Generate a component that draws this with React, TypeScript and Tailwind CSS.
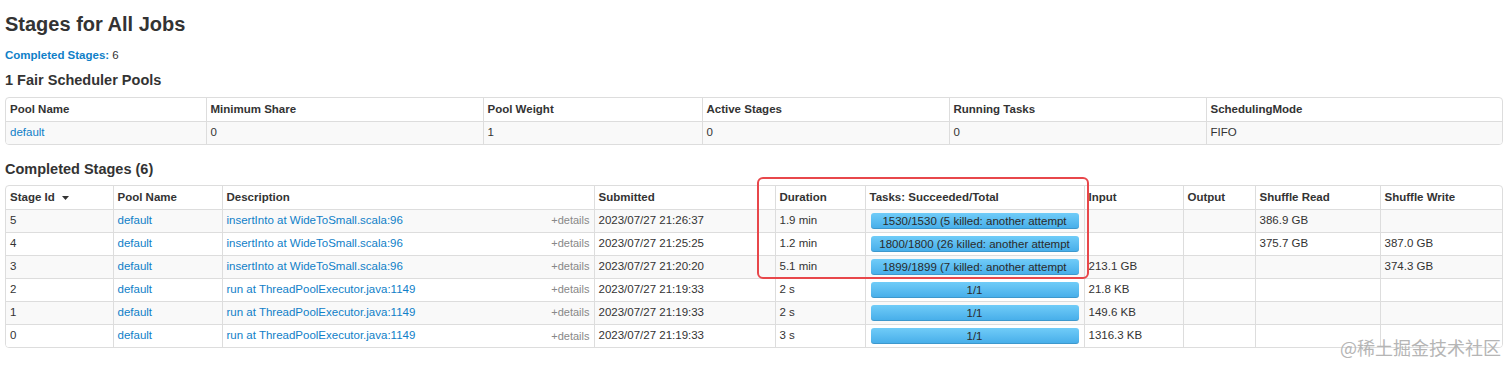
import React from 'react'

const poolCols = [
  { name: 'Pool Name', w: 200 },
  { name: 'Minimum Share', w: 277 },
  { name: 'Pool Weight', w: 219 },
  { name: 'Active Stages', w: 247 },
  { name: 'Running Tasks', w: 257 },
  { name: 'SchedulingMode', w: 298 },
]

const stageCols = [
  { name: 'Stage Id', w: 107 },
  { name: 'Pool Name', w: 109 },
  { name: 'Description', w: 372 },
  { name: 'Submitted', w: 181 },
  { name: 'Duration', w: 90 },
  { name: 'Tasks: Succeeded/Total', w: 219 },
  { name: 'Input', w: 99 },
  { name: 'Output', w: 72 },
  { name: 'Shuffle Read', w: 125 },
  { name: 'Shuffle Write', w: 124 },
]

type Stage = {
  id: number
  desc: string
  submitted: string
  duration: string
  tasks: string
  input: string
  shuffleRead: string
  shuffleWrite: string
}

const stages: Stage[] = [
  { id: 5, desc: 'insertInto at WideToSmall.scala:96', submitted: '2023/07/27 21:26:37', duration: '1.9 min', tasks: '1530/1530 (5 killed: another attempt', input: '', shuffleRead: '386.9 GB', shuffleWrite: '' },
  { id: 4, desc: 'insertInto at WideToSmall.scala:96', submitted: '2023/07/27 21:25:25', duration: '1.2 min', tasks: '1800/1800 (26 killed: another attempt', input: '', shuffleRead: '375.7 GB', shuffleWrite: '387.0 GB' },
  { id: 3, desc: 'insertInto at WideToSmall.scala:96', submitted: '2023/07/27 21:20:20', duration: '5.1 min', tasks: '1899/1899 (7 killed: another attempt', input: '213.1 GB', shuffleRead: '', shuffleWrite: '374.3 GB' },
  { id: 2, desc: 'run at ThreadPoolExecutor.java:1149', submitted: '2023/07/27 21:19:33', duration: '2 s', tasks: '1/1', input: '21.8 KB', shuffleRead: '', shuffleWrite: '' },
  { id: 1, desc: 'run at ThreadPoolExecutor.java:1149', submitted: '2023/07/27 21:19:33', duration: '2 s', tasks: '1/1', input: '149.6 KB', shuffleRead: '', shuffleWrite: '' },
  { id: 0, desc: 'run at ThreadPoolExecutor.java:1149', submitted: '2023/07/27 21:19:33', duration: '3 s', tasks: '1/1', input: '1316.3 KB', shuffleRead: '', shuffleWrite: '' },
]

const cell = 'border-l border-t border-[#ddd] first:border-l-0 px-[4px] h-[23px] align-middle whitespace-nowrap overflow-hidden'
const head = 'border-l border-[#ddd] first:border-l-0 px-[4px] h-[23px] text-left font-bold align-middle whitespace-nowrap'
const link = 'text-[#0f80c8]'

export default function App() {
  return (
    <div className="relative w-[1512px] h-[371px] bg-white px-[5px] text-[11.5px] text-[#333] font-['Liberation_Sans',Helvetica,Arial,sans-serif] overflow-hidden">
      <h3 className="pt-[12px] h-[43px] text-[20px] leading-[24px] font-bold text-[#333]">Stages for All Jobs</h3>
      <div className="h-[25px] leading-[25px] text-[11.5px]">
        <a className="text-[#0f80c8] font-bold">Completed Stages:</a> 6
      </div>
      <h4 className="h-[24px] leading-[24px] text-[14.5px] font-bold">1 Fair Scheduler Pools</h4>
      <div className="mt-[5px] border border-[#ddd] rounded-[4px] w-[1498px] overflow-hidden">
        <table className="table-fixed border-collapse w-full">
          <colgroup>
            {poolCols.map(c => <col key={c.name} style={{ width: c.w }} />)}
          </colgroup>
          <thead>
            <tr>
              {poolCols.map(c => (
                <th key={c.name} className={head}>{c.name}</th>
              ))}
            </tr>
          </thead>
          <tbody>
            <tr className="bg-[#f9f9f9]">
              <td className={cell}><a className={link}>default</a></td>
              <td className={cell}>0</td>
              <td className={cell}>1</td>
              <td className={cell}>0</td>
              <td className={cell}>0</td>
              <td className={cell}>FIFO</td>
            </tr>
          </tbody>
        </table>
      </div>

      <h4 className="mt-[12px] h-[24px] leading-[24px] text-[14.5px] font-bold">Completed Stages (6)</h4>
      <div className="mt-[4px] border border-[#ddd] rounded-[4px] w-[1498px] overflow-hidden">
        <table className="table-fixed border-collapse w-full">
          <colgroup>
            {stageCols.map(c => <col key={c.name} style={{ width: c.w }} />)}
          </colgroup>
          <thead>
            <tr>
              {stageCols.map((c, i) => (
                <th key={c.name} className={head}>
                  {c.name}
                  {i === 0 && (
                    <svg className="inline-block ml-[7px] align-middle" width="7" height="4" viewBox="0 0 7 4">
                      <path d="M0 0h7L3.5 4z" fill="#333" />
                    </svg>
                  )}
                </th>
              ))}
            </tr>
          </thead>
          <tbody>
            {stages.map((s, i) => (
              <tr key={s.id} className={i % 2 === 0 ? 'bg-[#f9f9f9]' : 'bg-white'}>
                <td className={cell}>{s.id}</td>
                <td className={cell}><a className={link}>default</a></td>
                <td className={cell}>
                  <div className="flex items-center justify-between">
                    <a className={link}>{s.desc}</a>
                    <span className="text-[11px] text-[#888]">+details</span>
                  </div>
                </td>
                <td className={cell}>{s.submitted}</td>
                <td className={cell}>{s.duration}</td>
                <td className="border-l border-t border-[#ddd] px-[5px] h-[23px] align-middle">
                  <div className="h-[16px] rounded-[3px] bg-gradient-to-b from-[#70ccf8] to-[#45ade9] shadow-[inset_0_-1px_0_rgba(0,0,0,0.12)] text-center text-[11.5px] leading-[16px] text-[#2a2a2a] overflow-hidden whitespace-nowrap">
                    {s.tasks}
                  </div>
                </td>
                <td className={cell}>{s.input}</td>
                <td className={cell}></td>
                <td className={cell}>{s.shuffleRead}</td>
                <td className={cell}>{s.shuffleWrite}</td>
              </tr>
            ))}
          </tbody>
        </table>
      </div>

      {/* annotation box */}
      <div className="absolute left-[757px] top-[177px] w-[332px] h-[102px] border-[2.5px] border-[#e8474b] rounded-[6px]" />

      {/* watermark */}
      <div className="absolute left-[1340px] top-[336px] text-[18px] leading-[22px] text-[#b5b5b5] font-['Noto_Sans_CJK_SC',sans-serif] whitespace-nowrap">
        @稀土掘金技术社区
      </div>
    </div>
  )
}
